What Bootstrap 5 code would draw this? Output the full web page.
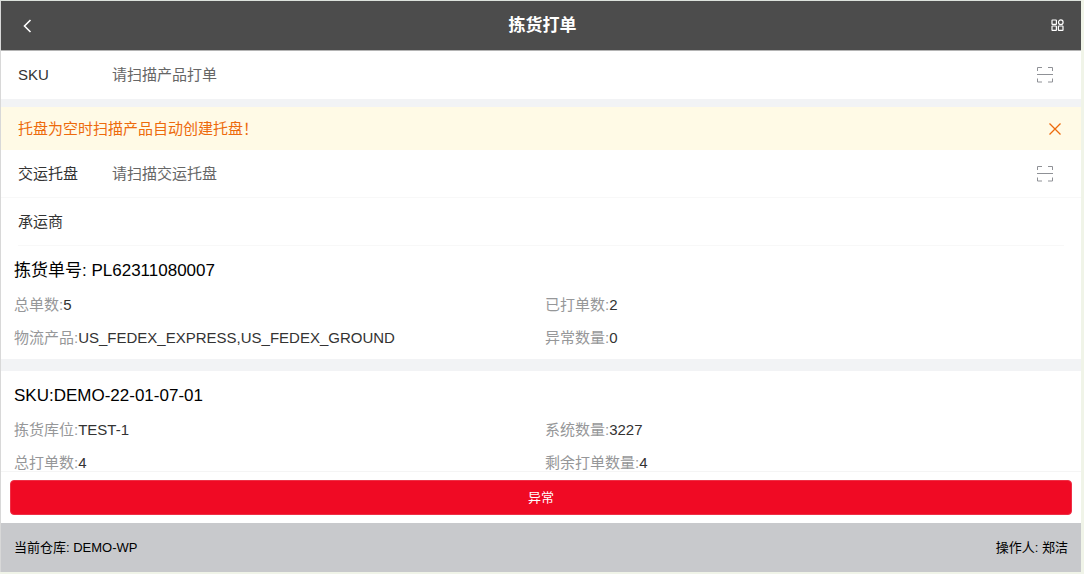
<!DOCTYPE html>
<html lang="zh-CN">
<head>
<meta charset="utf-8">
<meta name="viewport" content="width=device-width, initial-scale=1">
<title>拣货打单</title>
<link href="https://cdn.jsdelivr.net/npm/bootstrap@5.3.0/dist/css/bootstrap.min.css" rel="stylesheet">
<style>
  body { font-family: "Liberation Sans", "Noto Sans CJK SC", sans-serif; font-size: 15px; line-height: 20px; color: #333; background: #f0f4e8; padding-right: 3px; padding-bottom: 2px; }
  .app { background: #fff; border-left: 1px solid #d8d8d8; border-top: 1px solid #dce2dc; }
  .topbar { height: 50px; background: #4c4c4c; border-bottom: 1px solid #b4b4b4; color: #fff; padding: 0 16px; }
  .topbar h1 { font-size: 17px; line-height: 24px; font-weight: 700; }
  .icon-btn { background: none; border: 0; padding: 0; display: flex; color: inherit; }
  .scroller { scrollbar-width: none; }
  .scroller::-webkit-scrollbar { display: none; }
  .form-line { height: 48px; padding: 0 28px 0 17px; }
  .form-line label, .form-line .line-label { width: 94px; flex: none; }
  .form-line input { border: 0; padding: 0; outline: 0; background: none; color: #333; min-width: 0; }
  .form-line input::placeholder { color: #666; opacity: 1; }
  .scan { color: #8f9196; }
  .ruled { border-bottom: 1px solid #f8f8f8; }
  .ruled-inset { margin: 0 17px; padding-left: 0; }
  .notice { height: 43px; background: #fffae6; color: #ed6a0c; padding: 0 20px 0 17px; }
  .gap-sm { height: 8px; background: #f2f3f5; }
  .gap-lg { height: 12px; background: #f2f3f5; }
  .info { padding: 13px 13px 11px; }
  .info h2 { font-size: 17px; line-height: 24px; color: #000; margin-bottom: 12px; }
  .info dl { row-gap: 13px; }
  .info dt { color: #969799; font-weight: 400; }
  .actions { padding: 8px 9px; border-top: 1px solid #f5f5f5; }
  .btn-alert { --bs-btn-color: #fff; --bs-btn-bg: #f00a24; --bs-btn-border-color: #ee2f45; --bs-btn-hover-color: #fff; --bs-btn-hover-bg: #d80920; --bs-btn-font-size: 13px; --bs-btn-line-height: 19px; --bs-btn-padding-y: 7px; --bs-btn-border-radius: 4px; }
  .statusbar { height: 49px; background: #c8c9cc; color: #000; font-size: 13px; padding: 0 13px; }
</style>
</head>
<body class="vh-100">
<div class="app d-flex flex-column h-100">
  <header class="topbar d-flex align-items-center justify-content-between flex-shrink-0">
    <button class="icon-btn" type="button" aria-label="返回">
      <svg width="18" height="18" viewBox="0 0 18 18" fill="none" stroke="currentColor" stroke-width="1.600"><path d="M13.500 3 7.500 9l6 6"/></svg>
    </button>
    <h1 class="m-0">拣货打单</h1>
    <button class="icon-btn" type="button" aria-label="菜单">
      <svg width="15" height="16" viewBox="0 0 15 16" fill="none" stroke="currentColor" stroke-width="1.200"><rect x="2" y="2" width="4.400" height="4.400" rx=".5"/><circle cx="10.800" cy="4.200" r="2.300"/><rect x="2" y="8" width="4.400" height="4.400" rx=".5"/><rect x="8.400" y="8" width="4.600" height="4.400" rx=".5"/></svg>
    </button>
  </header>

  <main class="scroller flex-fill overflow-auto">
    <div class="form-line d-flex align-items-center">
      <label for="sku">SKU</label>
      <input id="sku" class="flex-fill" type="text" placeholder="请扫描产品打单">
      <button class="icon-btn scan" type="button" aria-label="扫描产品">
        <svg width="16" height="16" viewBox="0 0 16 16" fill="none" stroke="currentColor"><path d="M.5 4V.5H5M11 .5h4.500V4M.5 11.500v3.500H5M11 15h4.500v-3.500M0 7.500h16"/></svg>
      </button>
    </div>
    <div class="gap-sm"></div>
    <div class="notice d-flex align-items-center justify-content-between" role="alert">
      <span>托盘为空时扫描产品自动创建托盘！</span>
      <button class="icon-btn" type="button" aria-label="关闭">
        <svg width="12" height="12" viewBox="0 0 12 12" fill="none" stroke="currentColor" stroke-width="1.300"><path d="m.5.5 11 11m0-11-11 11"/></svg>
      </button>
    </div>
    <div class="form-line ruled d-flex align-items-center">
      <label for="pallet">交运托盘</label>
      <input id="pallet" class="flex-fill" type="text" placeholder="请扫描交运托盘">
      <button class="icon-btn scan" type="button" aria-label="扫描托盘">
        <svg width="16" height="16" viewBox="0 0 16 16" fill="none" stroke="currentColor"><path d="M.5 4V.5H5M11 .5h4.500V4M.5 11.500v3.500H5M11 15h4.500v-3.500M0 7.500h16"/></svg>
      </button>
    </div>
    <div class="form-line ruled ruled-inset d-flex align-items-center">
      <span class="line-label">承运商</span>
    </div>

    <section class="info">
      <h2 class="fw-normal">拣货单号: PL62311080007</h2>
      <dl class="row gx-0 m-0">
        <div class="col-6 d-flex"><dt>总单数:</dt><dd class="m-0">5</dd></div>
        <div class="col-6 d-flex ps-1"><dt>已打单数:</dt><dd class="m-0">2</dd></div>
        <div class="col-6 d-flex"><dt>物流产品:</dt><dd class="m-0">US_FEDEX_EXPRESS,US_FEDEX_GROUND</dd></div>
        <div class="col-6 d-flex ps-1"><dt>异常数量:</dt><dd class="m-0">0</dd></div>
      </dl>
    </section>
    <div class="gap-lg"></div>
    <section class="info pb-0">
      <h2 class="fw-normal">SKU:DEMO-22-01-07-01</h2>
      <dl class="row gx-0 m-0">
        <div class="col-6 d-flex"><dt>拣货库位:</dt><dd class="m-0">TEST-1</dd></div>
        <div class="col-6 d-flex ps-1"><dt>系统数量:</dt><dd class="m-0">3227</dd></div>
        <div class="col-6 d-flex"><dt>总打单数:</dt><dd class="m-0">4</dd></div>
        <div class="col-6 d-flex ps-1"><dt>剩余打单数量:</dt><dd class="m-0">4</dd></div>
      </dl>
    </section>
  </main>

  <div class="actions flex-shrink-0">
    <button class="btn btn-alert w-100" type="button">异常</button>
  </div>
  <footer class="statusbar d-flex align-items-center justify-content-between flex-shrink-0">
    <span>当前仓库: DEMO-WP</span>
    <span>操作人: 郑洁</span>
  </footer>
</div>
<script src="https://cdn.jsdelivr.net/npm/bootstrap@5.3.0/dist/js/bootstrap.bundle.min.js"></script>
</body>
</html>
